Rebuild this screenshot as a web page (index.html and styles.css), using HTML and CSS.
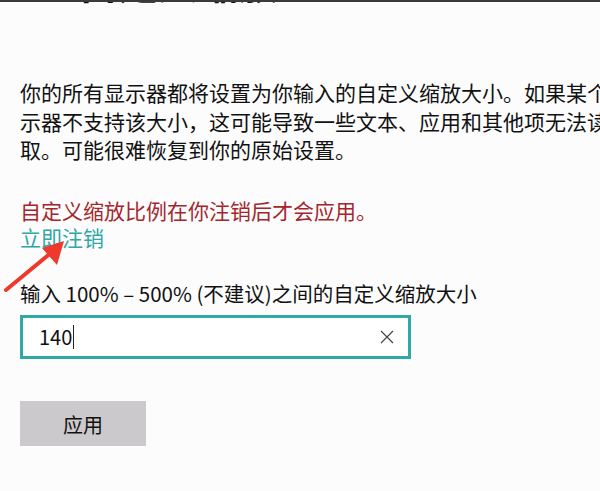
FILE: index.html
```html
<!DOCTYPE html>
<html lang="zh-CN">
<head>
    <meta charset="UTF-8">
    <meta name="viewport" content="width=device-width, initial-scale=1.0">
    <title>自定义缩放</title>
    <link rel="stylesheet" href="styles.css">
</head>
<body>

<div class="page">
    <h1 class="title">自定义缩放</h1>

    <p class="intro">你的所有显示器都将设置为你输入的自定义缩放大小。如果某个显<br>示器不支持该大小，这可能导致一些文本、应用和其他项无法读<br>取。可能很难恢复到你的原始设置。</p>

    <p class="warning">自定义缩放比例在你注销后才会应用。</p>
    <a class="link" href="#">立即注销</a>

    <label class="field-label" for="scale">输入 100% – 500% (不建议)之间的自定义缩放大小</label>
    <div class="textbox">
        <span class="value" id="scale">140</span><span class="caret"></span>
        <svg class="clear" width="14" height="14" viewBox="0 0 14 14">
            <path d="M1 1 L13 13 M13 1 L1 13" stroke="#444" stroke-width="1.2" fill="none"/>
        </svg>
    </div>

    <button class="apply">应用</button>

    <!-- annotation arrow -->
    <svg class="arrow" width="70" height="60" viewBox="0 0 70 60">
        <path d="M4 52 L50 14" stroke="#ee3a2c" stroke-width="4" stroke-linecap="round" fill="none"/>
        <path d="M62 3 L40 10 L55 27 Z" fill="#ee3a2c"/>
    </svg>
</div>

</body>
</html>
```

FILE: styles.css
```css
body {
    margin: 0;
    background: #fcfcfc;
    color: #111;
    font-family: "Noto Sans CJK SC", "Noto Sans", sans-serif;
    overflow: hidden;
}
.page {
    position: relative;
    height: 489px;
    border-top: 2px solid #3a3a3a;
    padding: 0 0 0 20px;
    overflow: hidden;
}
.title {
    margin: -42px 0 0 58px;
    font-size: 40px;
    line-height: 44px;
    font-weight: bold;
    color: #111;
}
.intro {
    margin: 74px 0 0;
    white-space: nowrap;
    font-size: 21px;
    line-height: 28.5px;
}
.warning {
    margin: 33px 0 0;
    font-size: 21px;
    line-height: 27px;
    color: #a4262c;
}
.link {
    display: block;
    font-size: 21px;
    line-height: 27px;
    color: #2ea7a5;
    text-decoration: none;
}
.field-label {
    display: block;
    margin-top: 28px;
    font-size: 20.5px;
    line-height: 28px;
    color: #111;
}
.textbox {
    display: flex;
    align-items: center;
    box-sizing: border-box;
    width: 391px;
    height: 44px;
    margin-top: 8px;
    padding: 0 14px 0 16px;
    border: 3px solid #2ea9a7;
    background: #fff;
}
.value {
    font-size: 20px;
}
.caret {
    width: 1px;
    height: 24px;
    margin-left: 1px;
    background: #222;
}
.clear {
    margin-left: auto;
}
.apply {
    display: block;
    width: 126px;
    height: 45px;
    margin-top: 42px;
    padding-top: 4px;
    border: none;
    background: #ccc9cc;
    color: #111;
    font-family: inherit;
    font-size: 20px;
}
.arrow {
    position: absolute;
    left: 2px;
    top: 236px;
}
```
